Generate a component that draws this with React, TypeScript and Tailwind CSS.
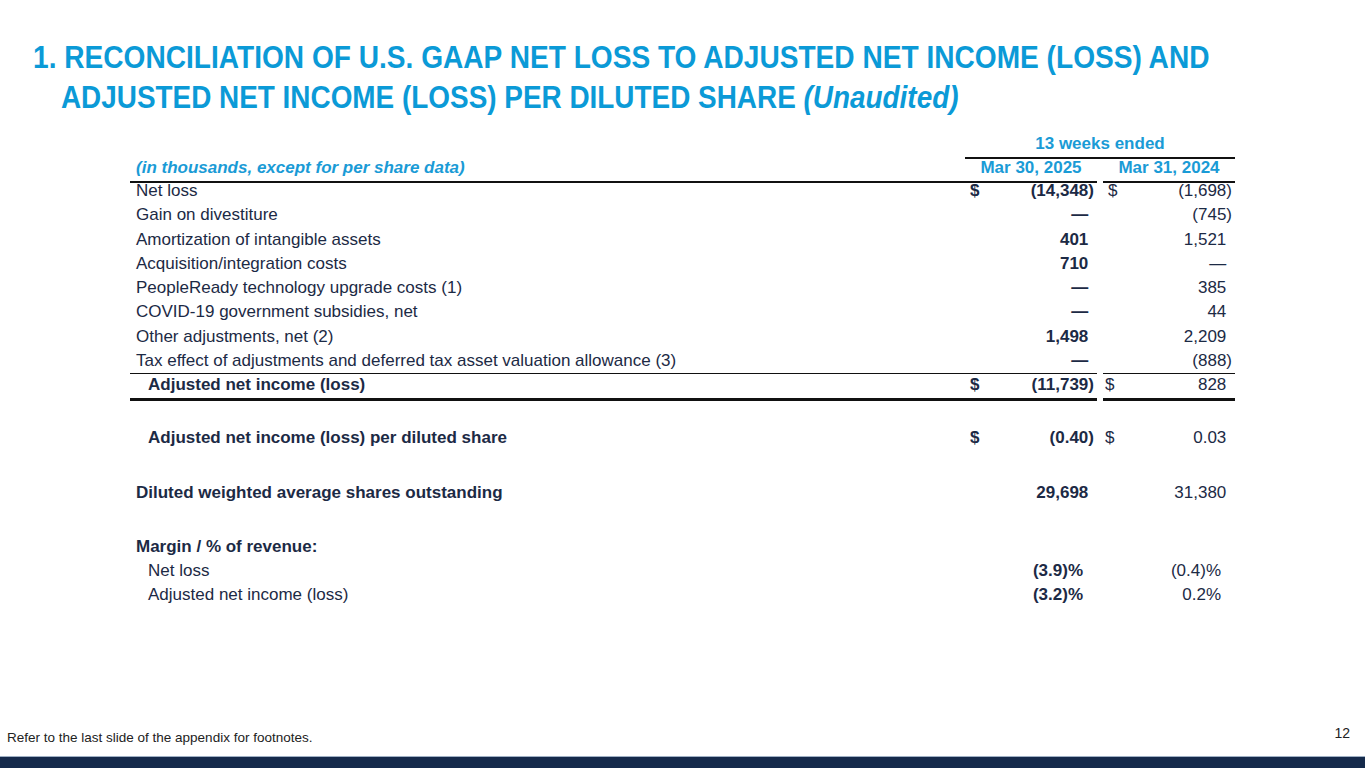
import React from 'react'

interface Row {
    label: string
    a: string
    b: string
    dollar?: boolean
}

const rows: Row[] = [
    { label: 'Net loss', a: '(14,348)', b: '(1,698)', dollar: true },
    { label: 'Gain on divestiture', a: '—', b: '(745)' },
    { label: 'Amortization of intangible assets', a: '401', b: '1,521' },
    { label: 'Acquisition/integration costs', a: '710', b: '—' },
    { label: 'PeopleReady technology upgrade costs (1)', a: '—', b: '385' },
    { label: 'COVID-19 government subsidies, net', a: '—', b: '44' },
    { label: 'Other adjustments, net (2)', a: '1,498', b: '2,209' },
    { label: 'Tax effect of adjustments and deferred tax asset valuation allowance (3)', a: '—', b: '(888)' },
]

const font = { fontFamily: '"Liberation Sans", Arial, sans-serif' }

// closing paren hangs past the number column, like accounting format
const Num = ({ v }: { v: string }) => (
    <span>
        {v}
        {!v.endsWith(')') && <span className="invisible">)</span>}
    </span>
)

const ValueCell = ({ v, dollar, bold, line }: { v: string; dollar?: boolean; bold?: boolean; line?: string }) => (
    <div className={`flex items-center justify-between pl-[5px] pr-[3px] ${bold ? 'font-bold' : ''} ${line ?? ''}`}>
        <span>{dollar ? '$' : ''}</span>
        <Num v={v} />
    </div>
)

const grid = 'grid grid-cols-[835px_132px_6px_132px]'

export default function App() {
    return (
        <div className="relative w-[1365px] h-[768px] bg-white overflow-hidden text-[#1c2a45]" style={font}>
            <h1 className="pl-[33px] pt-[37px] text-[32px] leading-[40px] font-bold text-[#0b9ad7]">
                <div className="origin-left scale-x-[0.878] whitespace-nowrap">
                    1. RECONCILIATION OF U.S. GAAP NET LOSS TO ADJUSTED NET INCOME (LOSS) AND
                </div>
                <div className="origin-left scale-x-[0.872] whitespace-nowrap pl-[32px]">
                    ADJUSTED NET INCOME (LOSS) PER DILUTED SHARE <i>(Unaudited)</i>
                </div>
            </h1>

            <div className="ml-[130px] mt-[14px] w-[1105px] text-[17px]">
                <div className={`${grid} h-[24px] items-center`}>
                    <div />
                    <div className="col-span-3 h-full flex items-center justify-center font-bold text-[#1a9bd6] border-b-[2px] border-[#111]">
                        13 weeks ended
                    </div>
                </div>
                <div className={`${grid} h-[23px] font-bold text-[#1a9bd6]`}>
                    <div className="flex items-center pl-[6px] italic border-b-[2px] border-[#111]">
                        (in thousands, except for per share data)
                    </div>
                    <div className="flex items-center justify-center border-b-[2px] border-[#111]">Mar 30, 2025</div>
                    <div />
                    <div className="flex items-center justify-center border-b-[2px] border-[#111]">Mar 31, 2024</div>
                </div>

                {rows.map((r, i) => {
                    const last = i === rows.length - 1
                    const line = last ? 'border-b-[1.5px] border-[#111]' : ''
                    return (
                        <div key={r.label} className={`${grid} h-[24.25px]`}>
                            <div className={`flex items-center pl-[6px] ${line}`}>{r.label}</div>
                            <ValueCell v={r.a} dollar={r.dollar} bold line={line} />
                            <div />
                            <ValueCell v={r.b} dollar={r.dollar} line={line} />
                        </div>
                    )
                })}

                <div className={`${grid} h-[24px] font-bold`}>
                    <div className="flex items-center pl-[18px] border-b-[3px] border-[#111]">Adjusted net income (loss)</div>
                    <ValueCell v="(11,739)" dollar bold line="border-b-[3px] border-[#111]" />
                    <div />
                    <div className="flex items-center justify-between pl-[2px] pr-[3px] font-normal border-b-[3px] border-[#111]">
                        <span>$</span>
                        <Num v="828" />
                    </div>
                </div>

                <div className={`${grid} h-[24px] mt-[29px]`}>
                    <div className="flex items-center pl-[18px] font-bold">Adjusted net income (loss) per diluted share</div>
                    <ValueCell v="(0.40)" dollar bold />
                    <div />
                    <div className="flex items-center justify-between pl-[2px] pr-[3px]">
                        <span>$</span>
                        <Num v="0.03" />
                    </div>
                </div>

                <div className={`${grid} h-[24px] mt-[31px]`}>
                    <div className="flex items-center pl-[6px] font-bold">Diluted weighted average shares outstanding</div>
                    <ValueCell v="29,698" bold />
                    <div />
                    <ValueCell v="31,380" />
                </div>

                <div className={`${grid} h-[24px] mt-[30px]`}>
                    <div className="flex items-center pl-[6px] font-bold">Margin / % of revenue:</div>
                </div>
                <div className={`${grid} h-[24px]`}>
                    <div className="flex items-center pl-[18px]">Net loss</div>
                    <div className="flex items-center justify-end pr-[14px] font-bold">(3.9)%</div>
                    <div />
                    <div className="flex items-center justify-end pr-[14px]">(0.4)%</div>
                </div>
                <div className={`${grid} h-[24px]`}>
                    <div className="flex items-center pl-[18px]">Adjusted net income (loss)</div>
                    <div className="flex items-center justify-end pr-[14px] font-bold">(3.2)%</div>
                    <div />
                    <div className="flex items-center justify-end pr-[14px]">0.2%</div>
                </div>
            </div>

            <div className="absolute left-0 right-0 bottom-0">
                <div className="flex items-end justify-between px-[7px] pb-[10px]">
                    <span className="text-[13.5px] leading-[16px] text-[#222]">Refer to the last slide of the appendix for footnotes.</span>
                    <span className="text-[14px] leading-[16px] text-[#222] pr-[8px] pb-[5px]">12</span>
                </div>
                <div className="h-[12px] bg-[#152a4b] border-t border-[#9fb0c4]" />
            </div>
        </div>
    )
}
